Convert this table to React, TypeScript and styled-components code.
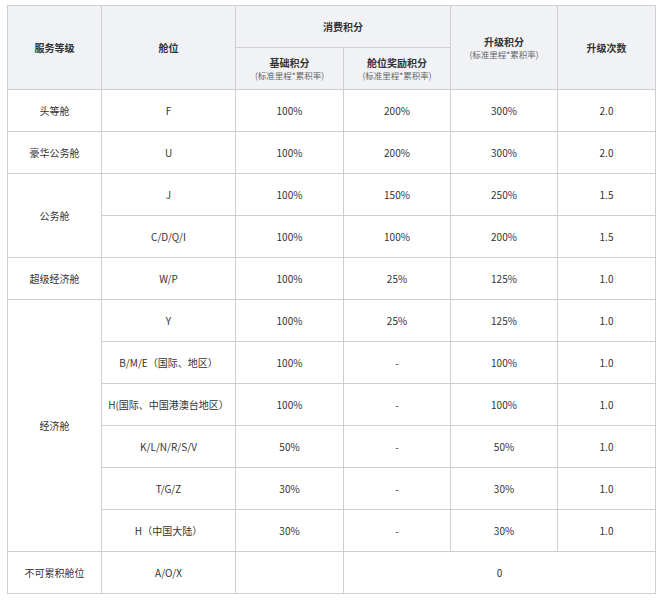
import styled, { createGlobalStyle } from "styled-components";

const GlobalStyle = createGlobalStyle`
    html, body {
        margin: 0;
        padding: 0;
        background: #fff;
    }
    body {
        font-family: "Noto Sans CJK SC", "Noto Sans", sans-serif;
        color: #333;
    }
`;

/* ------------------ Data ------------------ */

interface FareRow {
    cabin: string;
    base: string;
    bonus: string;
    upgrade: string;
    times: string;
}

interface FareGroup {
    level: string;
    rows: FareRow[];
}

const GROUPS: FareGroup[] = [
    { level: "头等舱", rows: [{ cabin: "F", base: "100%", bonus: "200%", upgrade: "300%", times: "2.0" }] },
    { level: "豪华公务舱", rows: [{ cabin: "U", base: "100%", bonus: "200%", upgrade: "300%", times: "2.0" }] },
    {
        level: "公务舱",
        rows: [
            { cabin: "J", base: "100%", bonus: "150%", upgrade: "250%", times: "1.5" },
            { cabin: "C/D/Q/I", base: "100%", bonus: "100%", upgrade: "200%", times: "1.5" },
        ],
    },
    { level: "超级经济舱", rows: [{ cabin: "W/P", base: "100%", bonus: "25%", upgrade: "125%", times: "1.0" }] },
    {
        level: "经济舱",
        rows: [
            { cabin: "Y", base: "100%", bonus: "25%", upgrade: "125%", times: "1.0" },
            { cabin: "B/M/E（国际、地区）", base: "100%", bonus: "-", upgrade: "100%", times: "1.0" },
            { cabin: "H(国际、中国港澳台地区）", base: "100%", bonus: "-", upgrade: "100%", times: "1.0" },
            { cabin: "K/L/N/R/S/V", base: "50%", bonus: "-", upgrade: "50%", times: "1.0" },
            { cabin: "T/G/Z", base: "30%", bonus: "-", upgrade: "30%", times: "1.0" },
            { cabin: "H（中国大陆）", base: "30%", bonus: "-", upgrade: "30%", times: "1.0" },
        ],
    },
];

const COL_WIDTHS = [94, 134, 108, 107, 107, 98];

/* ------------------ Styled ------------------ */

const Page = styled.div`
    padding: 5px 0 0 7px;
`;

const Table = styled.table`
    border-collapse: collapse;
    table-layout: fixed;
    width: 649px;
    font-size: 10px;
    line-height: 1.3;
`;

const Row = styled.tr`
    height: 42px;
`;

const HeadCell = styled.th`
    border: 1px solid #cfcfd2;
    background: #f1f2f5;
    color: #333;
    font-weight: bold;
    font-size: 10px;
    text-align: center;
    vertical-align: middle;
    padding: 0;
`;

const SubNote = styled.span`
    display: block;
    font-weight: normal;
    font-size: 8.5px;
    color: #666;
    margin-top: 1px;
`;

const Cell = styled.td`
    border: 1px solid #cfcfd2;
    color: #333;
    text-align: center;
    vertical-align: middle;
    padding: 0;
    white-space: nowrap;
`;

/* ------------------ Component ------------------ */

export default function App() {
    return (
        <>
            <GlobalStyle />
            <Page>
                <Table>
                    <colgroup>
                        {COL_WIDTHS.map((w, i) => (
                            <col key={i} style={{ width: w }} />
                        ))}
                    </colgroup>
                    <thead>
                        <Row>
                            <HeadCell rowSpan={2}>服务等级</HeadCell>
                            <HeadCell rowSpan={2}>舱位</HeadCell>
                            <HeadCell colSpan={2}>消费积分</HeadCell>
                            <HeadCell rowSpan={2}>
                                升级积分
                                <SubNote>(标准里程*累积率)</SubNote>
                            </HeadCell>
                            <HeadCell rowSpan={2}>升级次数</HeadCell>
                        </Row>
                        <Row>
                            <HeadCell>
                                基础积分
                                <SubNote>(标准里程*累积率)</SubNote>
                            </HeadCell>
                            <HeadCell>
                                舱位奖励积分
                                <SubNote>(标准里程*累积率)</SubNote>
                            </HeadCell>
                        </Row>
                    </thead>
                    <tbody>
                        {GROUPS.map((group) =>
                            group.rows.map((row, i) => (
                                <Row key={group.level + row.cabin}>
                                    {i === 0 && <Cell rowSpan={group.rows.length}>{group.level}</Cell>}
                                    <Cell>{row.cabin}</Cell>
                                    <Cell>{row.base}</Cell>
                                    <Cell>{row.bonus}</Cell>
                                    <Cell>{row.upgrade}</Cell>
                                    <Cell>{row.times}</Cell>
                                </Row>
                            ))
                        )}
                        <Row>
                            <Cell>不可累积舱位</Cell>
                            <Cell>A/O/X</Cell>
                            <Cell></Cell>
                            <Cell colSpan={3}>0</Cell>
                        </Row>
                    </tbody>
                </Table>
            </Page>
        </>
    );
}
